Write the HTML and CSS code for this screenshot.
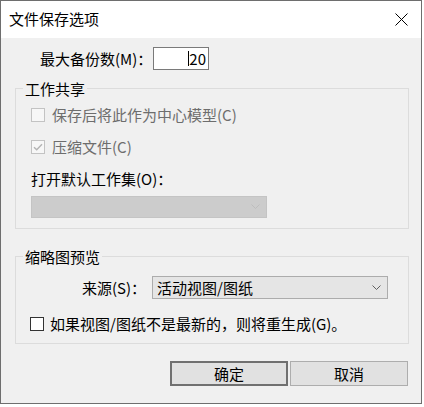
FILE: index.html
```html
<!DOCTYPE html>
<html lang="zh-CN">
<head>
<meta charset="utf-8">
<title>文件保存选项</title>
<link rel="stylesheet" href="styles.css">
</head>
<body>
<div class="window">
  <div class="titlebar">
    <span class="title">文件保存选项</span>
    <svg class="close" width="13" height="13" viewBox="0 0 13 13"><path d="M0.5 0.5 L12.5 12.5 M12.5 0.5 L0.5 12.5" stroke="#000" stroke-width="1" fill="none"/></svg>
  </div>
  <div class="content">
    <div class="backup-row">
      <span class="backup-label">最大备份数(M)：</span>
      <div class="num-input"><span class="caret"></span>20</div>
    </div>

    <div class="group group-share">
      <div class="legend">工作共享</div>
      <div class="check disabled first">
        <span class="box"></span>
        <span class="check-text">保存后将此作为中心模型(C)</span>
      </div>
      <div class="check disabled second">
        <span class="box"><svg width="12" height="12" viewBox="0 0 12 12"><path d="M2 6.2 L4.7 8.8 L10 3.2" stroke="#b4b4b4" stroke-width="1.4" fill="none"/></svg></span>
        <span class="check-text">压缩文件(C)</span>
      </div>
      <div class="field-label">打开默认工作集(O)：</div>
      <div class="combo combo-disabled">
        <span class="combo-text"></span>
        <svg class="chev" width="9" height="6" viewBox="0 0 9 6"><path d="M0.5 0.5 L4.5 4.5 L8.5 0.5" stroke="#bdbdbd" stroke-width="1" fill="none"/></svg>
      </div>
    </div>

    <div class="group group-thumb">
      <div class="legend">缩略图预览</div>
      <div class="source-row">
        <span class="source-label">来源(S)：</span>
        <div class="combo combo-source">
          <span class="combo-text">活动视图/图纸</span>
          <svg class="chev" width="9" height="6" viewBox="0 0 9 6"><path d="M0.5 0.5 L4.5 4.5 L8.5 0.5" stroke="#606060" stroke-width="1" fill="none"/></svg>
        </div>
      </div>
      <div class="check enabled">
        <span class="box"></span>
        <span class="check-text">如果视图/图纸不是最新的，则将重生成(G)。</span>
      </div>
    </div>

    <div class="buttons">
      <button class="btn btn-default">确定</button>
      <button class="btn">取消</button>
    </div>
  </div>
</div>
</body>
</html>
```

FILE: styles.css
```css
* { box-sizing: border-box; }

html, body {
  margin: 0;
  padding: 0;
  background: #ffffff;
}

body {
  font-family: "Noto Sans CJK SC", "Noto Sans", sans-serif;
  font-size: 15px;
  color: #000;
}

.window {
  width: 422px;
  height: 404px;
  border: 1px solid #6e6e6e;
  background: #f0f0f0;
  display: flex;
  flex-direction: column;
}

.titlebar {
  height: 37px;
  background: #ffffff;
  display: flex;
  align-items: center;
  padding-left: 8px;
  flex-shrink: 0;
}

.title {
  font-size: 15px;
  line-height: 18px;
  margin-top: -1px;
}

.close {
  margin-left: auto;
  margin-right: 13px;
  margin-top: 0px;
}

.content {
  padding: 0 12px 0 14px;
  display: flex;
  flex-direction: column;
}

.backup-row {
  display: flex;
  align-items: center;
  margin-top: 9px;
  height: 23px;
  padding-left: 25px;
}

.backup-label {
  width: 113px;
  line-height: 18px;
}

.num-input {
  width: 56px;
  height: 23px;
  background: #fff;
  border: 1px solid #7a7a7a;
  display: flex;
  align-items: center;
  justify-content: flex-end;
  padding-right: 2px;
  line-height: 18px;
  font-size: 15px;
}

.caret {
  width: 1px;
  height: 15px;
  background: #000;
  margin-right: 0px;
}

.group {
  border: 1px solid #dcdcdc;
  display: flex;
  flex-direction: column;
}

.group-share {
  margin-top: 18px;
  padding: 0 0 10px 15px;
}

.group-thumb {
  margin-top: 27px;
  padding: 0 0 10px 0;
}

.legend {
  align-self: flex-start;
  margin-top: -9px;
  margin-left: 7px;
  padding: 0 2px;
  background: #f0f0f0;
  line-height: 18px;
}

.group-share .legend {
  margin-left: -8px;
}

.check {
  display: flex;
  align-items: center;
  height: 19px;
}

.check .box {
  width: 14px;
  height: 14px;
  display: flex;
  align-items: center;
  justify-content: center;
}

.check-text {
  line-height: 18px;
}

.check.disabled {
  color: #6d6d6d;
  gap: 7px;
}

.check.disabled .box {
  border: 1px solid #c3c3c3;
  background: #f7f7f7;
}

.check.first {
  margin-top: 7px;
}

.check.second {
  margin-top: 13px;
}

.check.enabled {
  margin-top: 15px;
  padding-left: 14px;
  gap: 6px;
}

.check.enabled .box {
  border: 1px solid #333333;
  background: #ffffff;
}

.field-label {
  margin-top: 14px;
  line-height: 18px;
}

.combo {
  width: 236px;
  display: flex;
  align-items: center;
  padding: 0 6px 0 4px;
}

.combo-text {
  flex: 1;
  line-height: 18px;
}

.combo-disabled {
  margin-top: 8px;
  height: 22px;
  background: #cccccc;
  border: 1px solid #c4c4c4;
}

.combo-source {
  height: 23px;
  background: #e5e5e5;
  border: 1px solid #acacac;
}

.source-row {
  display: flex;
  align-items: center;
  margin-top: 10px;
  padding-left: 66px;
}

.source-label {
  width: 70px;
  line-height: 18px;
}

.buttons {
  display: flex;
  justify-content: flex-end;
  gap: 2px;
  margin-top: 17px;
  margin-right: 1px;
}

.btn {
  width: 118px;
  height: 25px;
  background: #e1e1e1;
  border: 1px solid #adadad;
  font-family: "Noto Sans CJK SC", "Noto Sans", sans-serif;
  font-size: 15px;
  line-height: 18px;
  color: #000;
  padding: 0;
  margin: 0;
}

.btn-default {
  border: 2px solid #707070;
}
```
